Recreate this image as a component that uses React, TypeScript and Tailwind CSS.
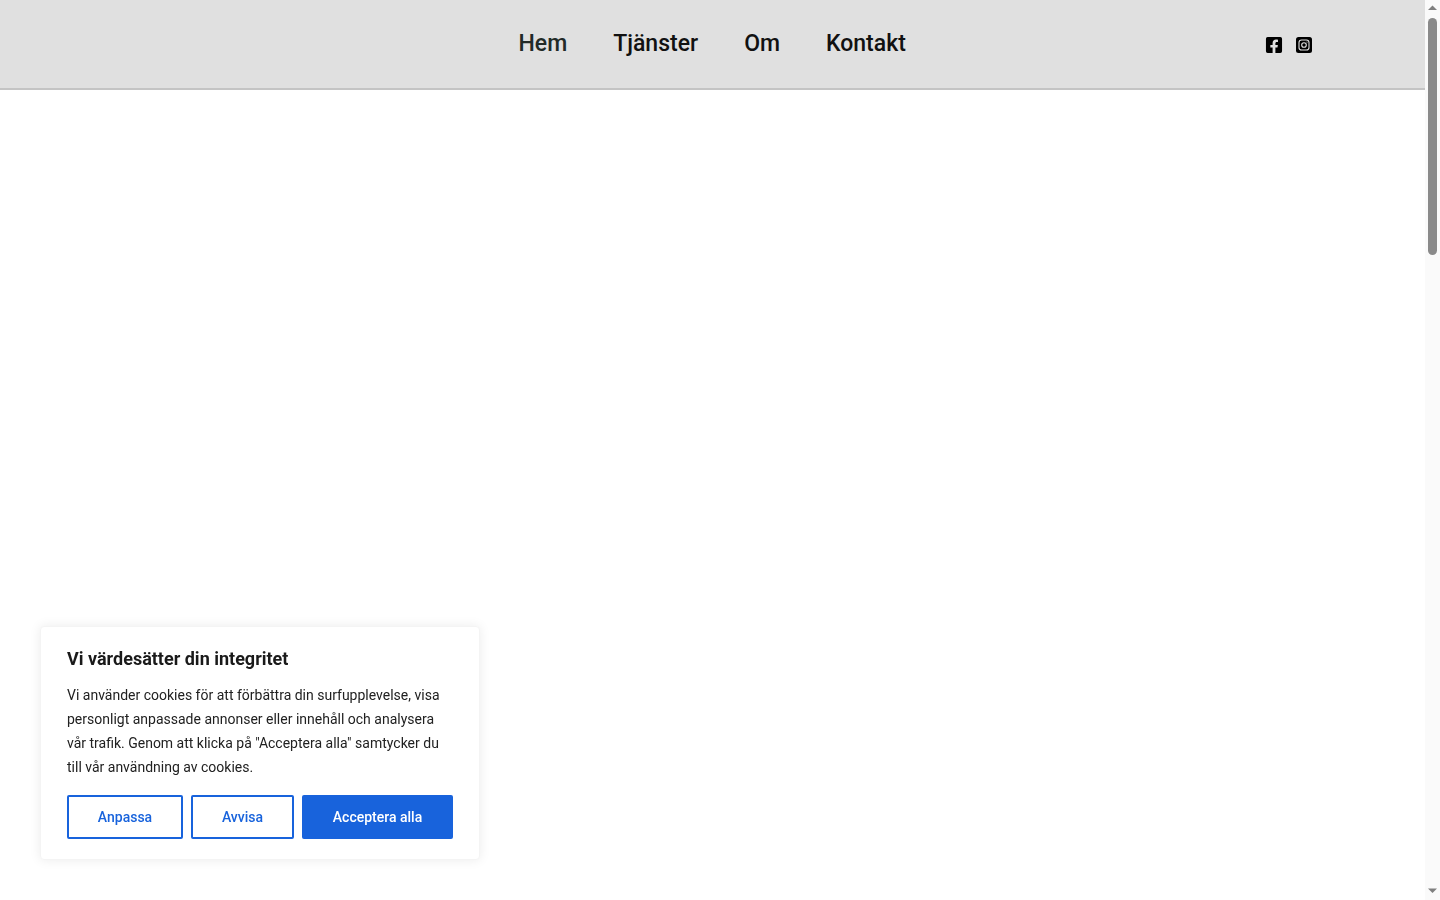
import { FaFacebookSquare } from 'react-icons/fa';

const navLinks = [
  { label: 'Hem', color: 'text-[#222a27]' },
  { label: 'Tjänster', color: 'text-[#111111]' },
  { label: 'Om', color: 'text-[#111111]' },
  { label: 'Kontakt', color: 'text-[#111111]' },
];

function InstagramIcon() {
  return (
    <svg width="16" height="16" viewBox="0 0 16 16" aria-hidden="true">
      <rect width="16" height="16" rx="2.5" fill="#000" />
      <rect x="3" y="3" width="10" height="10" rx="2.6" fill="none" stroke="#e0e0e0" strokeWidth="1.1" />
      <circle cx="8" cy="8" r="2.3" fill="none" stroke="#e0e0e0" strokeWidth="1.1" />
      <circle cx="11" cy="5" r="0.6" fill="#e0e0e0" />
    </svg>
  );
}

function CookieBanner() {
  return (
    <div className="fixed left-[40px] bottom-[40px] w-[440px] h-[234px] bg-white rounded-[4px] border border-[#f4f4f4] shadow-[0_0_12px_rgba(0,0,0,0.08)] px-[26px] pt-[21px]">
      <h2 className="text-[18px] leading-[22px] font-bold text-[#1a1a1a]">Vi värdesätter din integritet</h2>
      <p className="mt-[13px] text-[14px] leading-[24px] text-[#212121]">
        Vi använder cookies för att förbättra din surfupplevelse, visa personligt anpassade annonser eller innehåll och analysera vår trafik. Genom att klicka på "Acceptera alla" samtycker du till vår användning av cookies.
      </p>
      <div className="mt-[16px] flex gap-2">
        <button type="button" className="w-[116px] h-[44px] rounded-[2px] border-2 border-[#1863dc] text-[14px] font-medium text-[#1863dc]">
          Anpassa
        </button>
        <button type="button" className="w-[103px] h-[44px] rounded-[2px] border-2 border-[#1863dc] text-[14px] font-medium text-[#1863dc]">
          Avvisa
        </button>
        <button type="button" className="w-[151px] h-[44px] rounded-[2px] bg-[#1863dc] text-[14px] font-medium text-white">
          Acceptera alla
        </button>
      </div>
    </div>
  );
}

function Scrollbar() {
  return (
    <div className="w-[15px] h-full shrink-0 bg-[#fafafa] flex flex-col items-center">
      <svg width="15" height="15" viewBox="0 0 15 15" className="shrink-0" aria-hidden="true">
        <path d="M3 10 L7.5 5.5 L12 10 Z" fill="#7f7f7f" />
      </svg>
      <div className="mt-[3px] w-[9px] h-[237px] rounded-full bg-[#8a8a8a]" />
      <svg width="15" height="15" viewBox="0 0 15 15" className="shrink-0 mt-auto" aria-hidden="true">
        <path d="M3 3.5 L7.5 8 L12 3.5 Z" fill="#7f7f7f" />
      </svg>
    </div>
  );
}

export default function App() {
  return (
    <div className="h-screen flex overflow-hidden bg-white font-['Roboto',sans-serif]">
      <div className="flex-1 min-w-0">
        {/* header */}
        <header className="h-[90px] bg-[#e0e0e0] border-b-2 border-[#c4c4c4] flex">
          <nav className="ml-[518.5px] pt-[29px] flex gap-[46px] h-fit">
            {navLinks.map((l) => (
              <a key={l.label} href="#" className={`text-[23px] leading-[30px] font-medium ${l.color}`}>
                {l.label}
              </a>
            ))}
          </nav>
          <div className="ml-auto mr-[113px] pt-[37px] flex gap-[14px] h-fit">
            <FaFacebookSquare className="w-[16px] h-[16px] text-black" style={{ transform: 'scale(1.15)' }} />
            <InstagramIcon />
          </div>
        </header>
      </div>
      <Scrollbar />

      <CookieBanner />
    </div>
  );
}
